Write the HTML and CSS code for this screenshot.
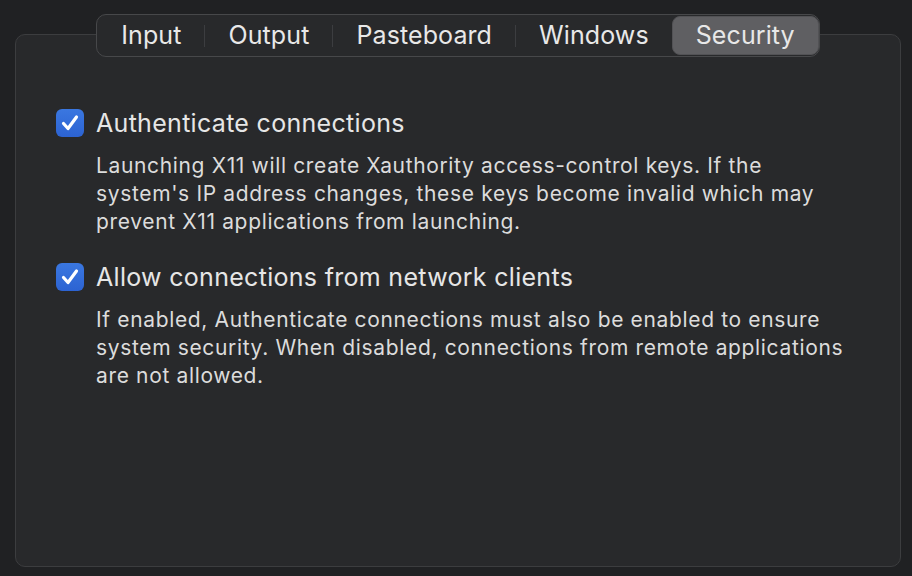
FILE: index.html
```html
<!DOCTYPE html>
<html>
<head>
<meta charset="utf-8">
<link rel="stylesheet" href="styles.css">
</head>
<body>
<div class="window">
  <div class="tabs">
    <div class="tab">Input</div>
    <div class="sep"></div>
    <div class="tab">Output</div>
    <div class="sep"></div>
    <div class="tab">Pasteboard</div>
    <div class="sep"></div>
    <div class="tab">Windows</div>
    <div class="tab selected">Security</div>
  </div>
  <div class="panel">
    <div class="option">
      <div class="row">
        <span class="check"><svg viewBox="0 0 28 28" width="28" height="28"><path d="M7.5 14.5 L12 19.5 L20.5 8" fill="none" stroke="#fff" stroke-width="3.2" stroke-linecap="round" stroke-linejoin="round"/></svg></span>
        <span class="label">Authenticate connections</span>
      </div>
      <p class="desc">Launching X11 will create Xauthority access-control keys. If the system's IP address changes, these keys become invalid which may prevent X11 applications from launching.</p>
    </div>
    <div class="option">
      <div class="row">
        <span class="check"><svg viewBox="0 0 28 28" width="28" height="28"><path d="M7.5 14.5 L12 19.5 L20.5 8" fill="none" stroke="#fff" stroke-width="3.2" stroke-linecap="round" stroke-linejoin="round"/></svg></span>
        <span class="label">Allow connections from network clients</span>
      </div>
      <p class="desc">If enabled, Authenticate connections must also be enabled to ensure system security. When disabled, connections from remote applications are not allowed.</p>
    </div>
  </div>
</div>
</body>
</html>
```
FILE: styles.css
```css
html, body {
  margin: 0;
  padding: 0;
  background: #202123;
  font-family: Inter, "Noto Sans", sans-serif;
  color: #e4e4e4;
}
.window {
  padding: 14px 11px 10px 15px;
  display: flex;
  flex-direction: column;
  align-items: center;
}
.tabs {
  position: relative;
  z-index: 1;
  display: flex;
  align-items: center;
  height: 41px;
  padding: 0 0 0 1px;
  border: 1px solid #47484a;
  border-radius: 10px;
  background: #28292b;
}
.tab {
  font-size: 25px;
  letter-spacing: 0.1px;
  padding: 0 23px;
  line-height: 39px;
  color: #e8e8e8;
  border-radius: 8px;
}
.tab.selected {
  background: #5f5f62;
  height: 39px;
  padding: 0 23px;
  border: 1px solid #525255;
  line-height: 37px;
  box-sizing: border-box;
}
.sep {
  width: 1px;
  height: 22px;
  background: #3c3d40;
}
.panel {
  align-self: stretch;
  margin-top: -23px;
  height: 457px;
  border: 1px solid #3c3d3f;
  border-radius: 10px;
  background: #28292b;
  padding: 74px 40px 0 40px;
}
.option {
  margin-bottom: 27px;
}
.row {
  display: flex;
  align-items: center;
  gap: 12px;
  height: 28px;
}
.check {
  width: 28px;
  height: 28px;
  border-radius: 6px;
  background: linear-gradient(#3a77e0, #2c63d2);
  display: block;
}
.check svg { display: block; }
.label {
  font-size: 25px;
  letter-spacing: 0.3px;
  color: #e6e6e6;
}
.desc {
  margin: 15px 0 0 40px;
  font-size: 21px;
  letter-spacing: 0.65px;
  line-height: 28px;
  color: #dcdcdc;
  max-width: 765px;
}
```
